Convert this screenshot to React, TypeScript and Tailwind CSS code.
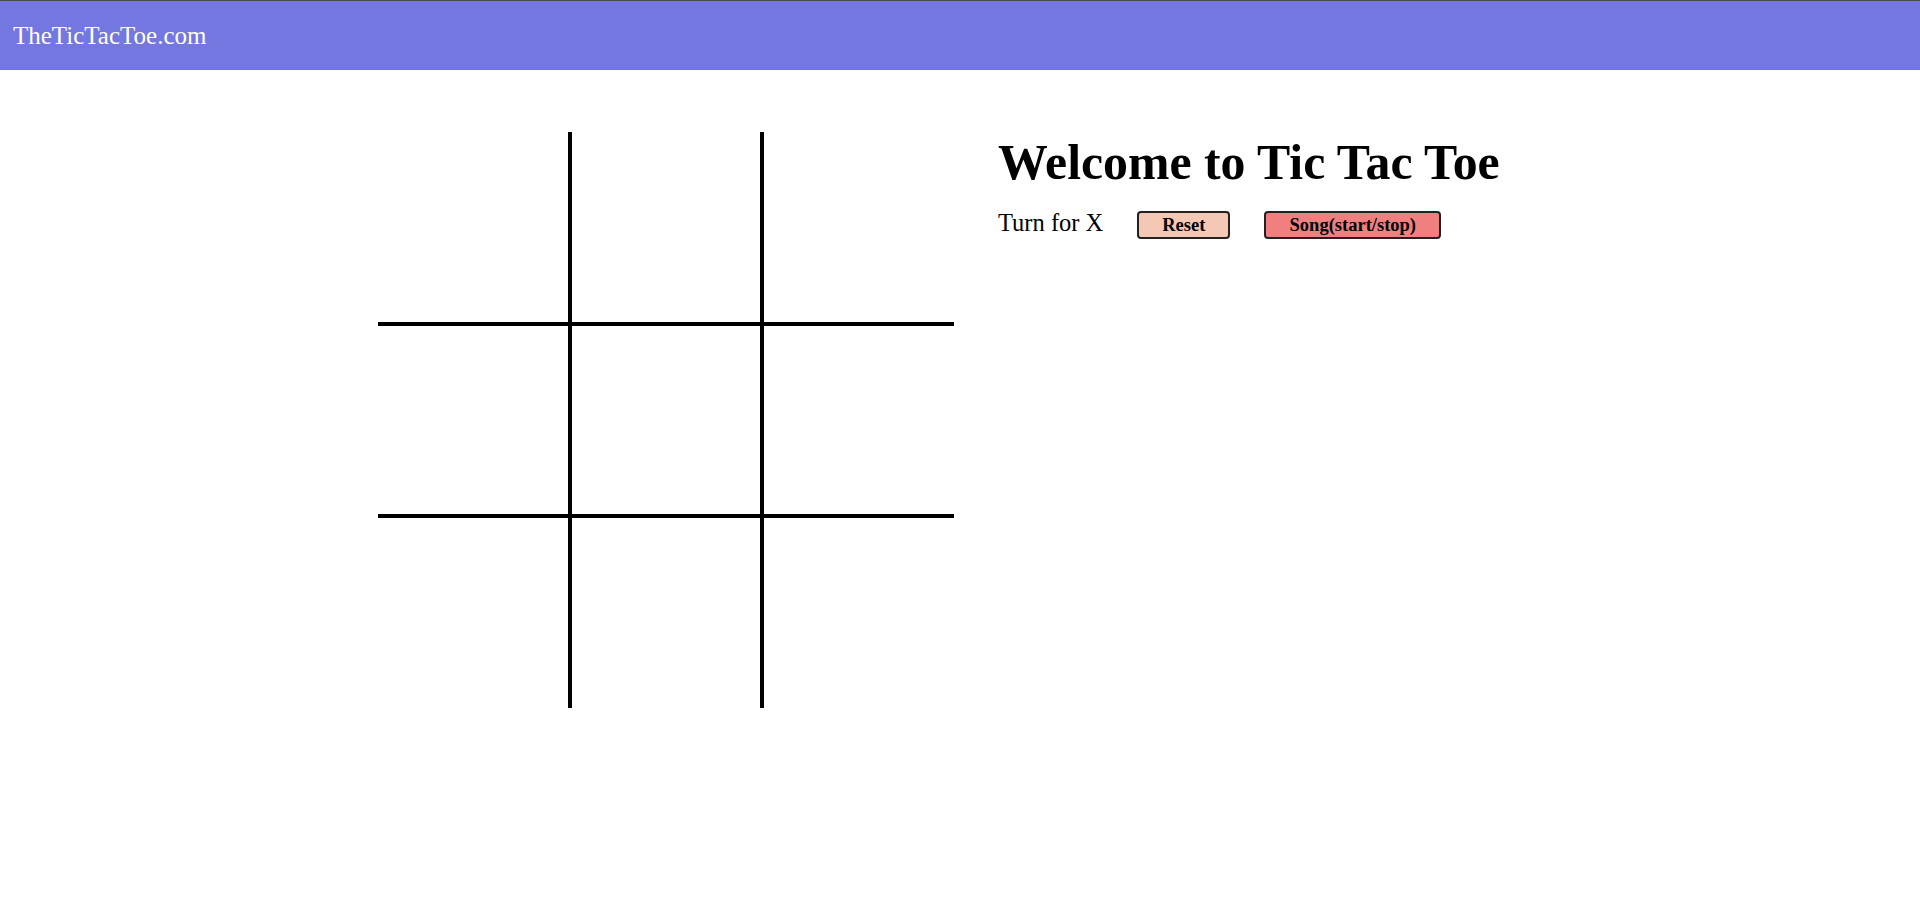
import { useState } from 'react';

const serif = { fontFamily: '"Liberation Serif", "Times New Roman", serif' };

function Cell({ i, value, onClick }: { i: number; value: string; onClick: () => void }) {
  const row = Math.floor(i / 3);
  const col = i % 3;
  const borders = [
    row > 0 ? 'border-t-2' : '',
    row < 2 ? 'border-b-2' : '',
    col > 0 ? 'border-l-2' : '',
    col < 2 ? 'border-r-2' : '',
  ].join(' ');
  return (
    <div
      onClick={onClick}
      className={`w-[192px] h-[192px] border-black flex items-center justify-center text-[96px] cursor-pointer ${borders}`}
    >
      {value}
    </div>
  );
}

export default function App() {
  const [board, setBoard] = useState<string[]>(Array(9).fill(''));
  const [turn, setTurn] = useState('X');

  const play = (i: number) => {
    if (board[i]) return;
    const next = [...board];
    next[i] = turn;
    setBoard(next);
    setTurn(turn === 'X' ? 'O' : 'X');
  };

  const reset = () => {
    setBoard(Array(9).fill(''));
    setTurn('X');
  };

  return (
    <div className="min-h-screen bg-white text-black" style={serif}>
      {/* Navbar */}
      <nav className="h-[70px] bg-[#7477e0] border-t border-[#4b4b4b] flex items-center pl-[13px]">
        <span className="text-white text-[25px]">TheTicTacToe.com</span>
      </nav>

      <div className="flex pt-[62px] pl-[378px] gap-[44px]">
        {/* Board */}
        <div className="grid grid-cols-3 w-[576px]">
          {board.map((v, i) => (
            <Cell key={i} i={i} value={v} onClick={() => play(i)} />
          ))}
        </div>

        {/* Info */}
        <div className="pt-[3px]">
          <h1 className="text-[49.8px] font-bold leading-[56px]">Welcome to Tic Tac Toe</h1>
          <div className="flex items-start mt-[18px]">
            <span className="text-[24.5px] leading-[28px]">Turn for {turn}</span>
            <button
              onClick={reset}
              className="ml-[34px] mt-[2px] w-[93px] h-[28px] bg-[#f5c8b5] border-2 border-[#222] rounded-[4px] text-[18.5px] font-bold leading-none"
            >
              Reset
            </button>
            <button className="ml-[34px] mt-[2px] w-[177px] h-[28px] bg-[#f08080] border-2 border-[#222] rounded-[4px] text-[18.5px] font-bold leading-none">
              Song(start/stop)
            </button>
          </div>
        </div>
      </div>
    </div>
  );
}
